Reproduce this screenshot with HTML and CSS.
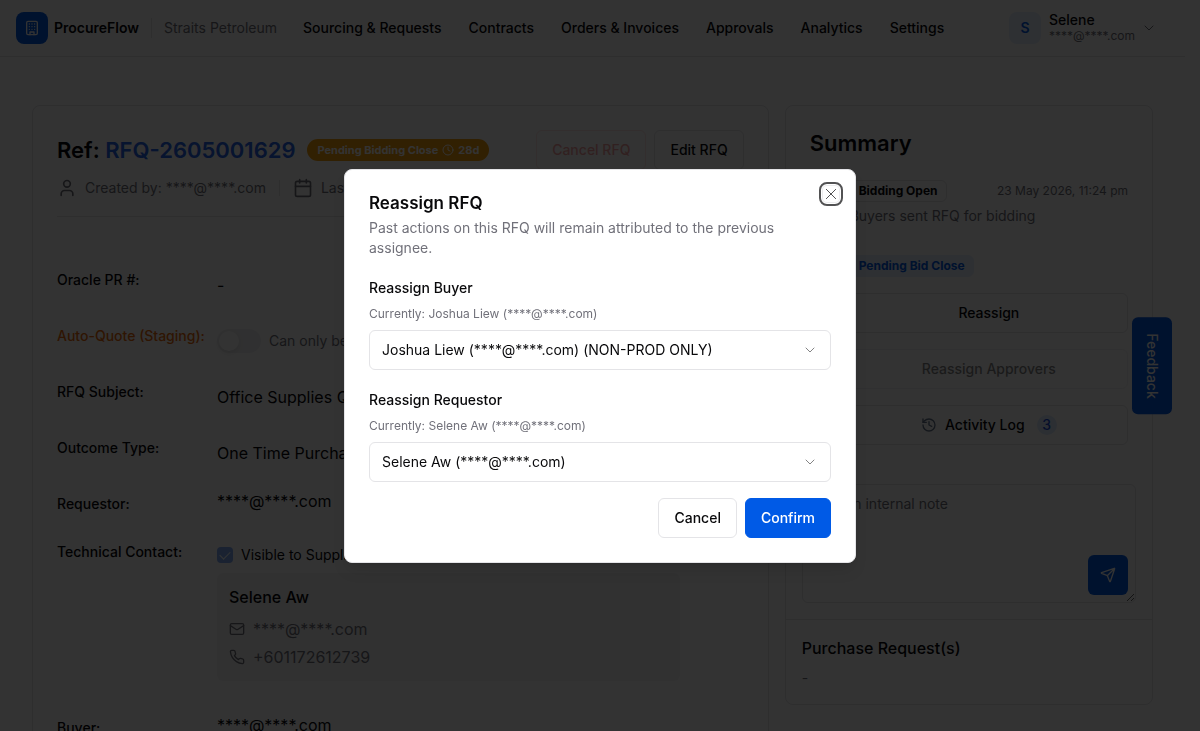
FILE: index.html
```html
<!DOCTYPE html>
<html lang="en">

<head>
    <meta charset="UTF-8">
    <meta name="viewport" content="width=device-width, initial-scale=1.0">
    <title>ProcureFlow - RFQ-2605001629</title>
    <link rel="stylesheet" href="styles.css">
</head>

<body>
    <header class="header">
        <a class="brand" href="#">
            <span class="brand-logo">
                <svg class="icon" width="16" height="16" viewBox="0 0 24 24">
                    <rect x="4" y="2" width="16" height="20" rx="2" />
                    <path d="M9 22v-4h6v4M8 6h.01M16 6h.01M12 6h.01M12 10h.01M12 14h.01M16 10h.01M16 14h.01M8 10h.01M8 14h.01" />
                </svg>
            </span>
            <span class="brand-name">ProcureFlow</span>
        </a>
        <span class="company">Straits Petroleum</span>
        <nav class="navbar">
            <a href="#">Sourcing &amp; Requests</a>
            <a href="#">Contracts</a>
            <a href="#">Orders &amp; Invoices</a>
            <a href="#">Approvals</a>
            <a href="#">Analytics</a>
            <a href="#">Settings</a>
        </nav>
        <button type="button" class="user-menu">
            <span class="avatar">S</span>
            <span class="user-info">
                <span class="user-name">Selene</span>
                <span class="user-email">****@****.com</span>
            </span>
            <svg class="icon thin user-chevron" width="16" height="16" viewBox="0 0 24 24">
                <path d="m6 9 6 6 6-6" />
            </svg>
        </button>
    </header>

    <main class="container">
        <!-- RFQ details -->
        <section class="card rfq">
            <div class="rfq-top">
                <h1 class="heading">Ref: <a href="#">RFQ-2605001629</a></h1>
                <span class="status">Pending Bidding Close
                    <svg class="icon" width="12" height="12" viewBox="0 0 24 24">
                        <circle cx="12" cy="12" r="10" />
                        <path d="M12 6v6l4 2" />
                    </svg>
                    28d</span>
                <div class="rfq-actions">
                    <button type="button" class="btn btn-danger" disabled>Cancel RFQ</button>
                    <button type="button" class="btn">Edit RFQ</button>
                </div>
            </div>
            <div class="meta">
                <svg class="icon" width="20" height="20" viewBox="0 0 24 24">
                    <path d="M19 21v-2a4 4 0 0 0-4-4H9a4 4 0 0 0-4 4v2" />
                    <circle cx="12" cy="7" r="4" />
                </svg>
                <span>Created by: ****@****.com</span>
                <span class="meta-line"></span>
                <svg class="icon" width="20" height="20" viewBox="0 0 24 24">
                    <path d="M8 2v4M16 2v4M3 10h18" />
                    <rect x="3" y="4" width="18" height="18" rx="2" />
                </svg>
                <span>Last updated: 23 May 2026</span>
            </div>

            <div class="fields">
                <div class="field">
                    <span class="field-label">Oracle PR #:</span>
                    <span class="field-value">-</span>
                </div>
                <div class="field">
                    <label class="field-label staging" for="autoQuote">Auto-Quote (Staging):</label>
                    <div class="field-value">
                        <input type="checkbox" class="switch" id="autoQuote" disabled>
                        <span class="hint">Can only be changed in draft</span>
                    </div>
                </div>
                <div class="field">
                    <span class="field-label">RFQ Subject:</span>
                    <span class="field-value">Office Supplies Quotation</span>
                </div>
                <div class="field">
                    <span class="field-label">Outcome Type:</span>
                    <span class="field-value">One Time Purchase</span>
                </div>
                <div class="field">
                    <span class="field-label">Requestor:</span>
                    <span class="field-text">****@****.com</span>
                </div>
                <div class="field">
                    <span class="field-label">Technical Contact:</span>
                    <div class="contact">
                        <label class="visible-check">
                            <input type="checkbox" class="checkbox" checked disabled>
                            Visible to Supplier
                        </label>
                        <div class="contact-box">
                            <div class="contact-name">Selene Aw</div>
                            <div class="contact-line">
                                <svg class="icon" width="16" height="16" viewBox="0 0 24 24">
                                    <rect x="2" y="4" width="20" height="16" rx="2" />
                                    <path d="m22 7-8.97 5.7a1.94 1.94 0 0 1-2.06 0L2 7" />
                                </svg>
                                ****@****.com
                            </div>
                            <div class="contact-line">
                                <svg class="icon" width="16" height="16" viewBox="0 0 24 24">
                                    <path d="M22 16.92v3a2 2 0 0 1-2.18 2 19.79 19.79 0 0 1-8.63-3.07 19.5 19.5 0 0 1-6-6 19.79 19.79 0 0 1-3.07-8.67A2 2 0 0 1 4.11 2h3a2 2 0 0 1 2 1.72c.13.96.36 1.9.7 2.81a2 2 0 0 1-.45 2.11L8.09 9.91a16 16 0 0 0 6 6l1.27-1.27a2 2 0 0 1 2.11-.45c.91.34 1.85.57 2.81.7A2 2 0 0 1 22 16.92z" />
                                </svg>
                                +601172612739
                            </div>
                        </div>
                    </div>
                </div>
                <div class="field">
                    <span class="field-label">Buyer:</span>
                    <span class="field-text">****@****.com</span>
                </div>
            </div>
        </section>

        <!-- Summary -->
        <aside class="card summary">
            <div class="summary-body">
                <h2 class="heading">Summary</h2>
                <div class="step">
                    <span class="dot"></span>
                    <div class="step-body">
                        <div class="step-top">
                            <span class="tag">Bidding Open</span>
                            <time class="step-date">23 May 2026, 11:24 pm</time>
                        </div>
                        <p class="step-text">Buyers sent RFQ for bidding</p>
                    </div>
                </div>
                <div class="step">
                    <span class="dot"></span>
                    <div class="step-body">
                        <span class="tag tag-blue">Pending Bid Close</span>
                        <div class="step-actions">
                            <button type="button" class="btn">Reassign</button>
                            <button type="button" class="btn" disabled>Reassign Approvers</button>
                            <button type="button" class="btn">
                                <svg class="icon history" width="16" height="16" viewBox="0 0 24 24">
                                    <path d="M3 12a9 9 0 1 0 9-9 9.75 9.75 0 0 0-6.74 2.74L3 8" />
                                    <path d="M3 3v5h5M12 7v5l4 2" />
                                </svg>
                                Activity Log
                                <span class="count">3</span>
                            </button>
                        </div>
                    </div>
                </div>
            </div>
            <div class="note">
                <textarea class="note-input" aria-label="Internal note" placeholder="Add an internal note"></textarea>
                <button type="button" class="note-send" aria-label="Send note">
                    <svg class="icon" width="16" height="16" viewBox="0 0 24 24">
                        <path d="M14.54 21.69a.5.5 0 0 0 .94-.03l6.5-19a.5.5 0 0 0-.64-.63l-19 6.5a.5.5 0 0 0-.02.93l7.93 3.18a2 2 0 0 1 1.11 1.11zM21.85 2.15l-10.94 10.94" />
                    </svg>
                </button>
            </div>
            <div class="requests">
                <h3>Purchase Request(s)</h3>
                <p>-</p>
            </div>
        </aside>
    </main>

    <button type="button" class="feedback">Feedback</button>

    <!-- Reassign dialog -->
    <div class="overlay">
        <div class="dialog" role="dialog" aria-modal="true" aria-labelledby="dialogTitle">
            <h2 class="dialog-title" id="dialogTitle">Reassign RFQ</h2>
            <p class="dialog-text">Past actions on this RFQ will remain attributed to the previous assignee.</p>
            <form class="dialog-form">
                <div class="form-group">
                    <label for="buyer">Reassign Buyer</label>
                    <p>Currently: Joshua Liew (****@****.com)</p>
                    <div class="select-wrap">
                        <select id="buyer" name="buyer">
                            <option>Joshua Liew (****@****.com) (NON-PROD ONLY)</option>
                        </select>
                        <svg class="icon thin" width="16" height="16" viewBox="0 0 24 24">
                            <path d="m6 9 6 6 6-6" />
                        </svg>
                    </div>
                </div>
                <div class="form-group">
                    <label for="requestor">Reassign Requestor</label>
                    <p>Currently: Selene Aw (****@****.com)</p>
                    <div class="select-wrap">
                        <select id="requestor" name="requestor">
                            <option>Selene Aw (****@****.com)</option>
                        </select>
                        <svg class="icon thin" width="16" height="16" viewBox="0 0 24 24">
                            <path d="m6 9 6 6 6-6" />
                        </svg>
                    </div>
                </div>
                <div class="dialog-buttons">
                    <button type="button" class="btn">Cancel</button>
                    <button type="button" class="btn btn-primary">Confirm</button>
                </div>
            </form>
            <button type="button" class="dialog-close" aria-label="Close">
                <svg class="icon thin" width="16" height="16" viewBox="0 0 24 24">
                    <path d="M19 5 5 19M5 5l14 14" />
                </svg>
            </button>
        </div>
    </div>
</body>

</html>
```

FILE: styles.css
```css
* {
    box-sizing: border-box;
}

html {
    height: 100%;
    overflow: hidden;
}

body {
    font-family: Inter, "Liberation Sans", sans-serif;
    font-size: 14px;
    line-height: 20px;
    color: #09090b;
    background-color: #fff;
    margin: 0;
    padding-right: 15px;
    height: 100%;
    overflow: hidden;
}

h1,
h2,
h3,
p {
    margin: 0;
}

a {
    color: inherit;
    text-decoration: none;
}

button,
select,
textarea {
    font: inherit;
    color: inherit;
}

button {
    cursor: pointer;
}

.icon {
    fill: none;
    stroke: currentColor;
    stroke-width: 2;
    stroke-linecap: round;
    stroke-linejoin: round;
    flex-shrink: 0;
}

.thin {
    stroke-width: 1.5;
}

/* Header */
.header {
    display: flex;
    align-items: center;
    height: 57px;
    padding: 0 24px 0 16px;
    border-bottom: 1px solid #e4e4e7;
}

.brand {
    display: flex;
    align-items: center;
    gap: 6px;
}

.brand-logo {
    display: flex;
    align-items: center;
    justify-content: center;
    width: 32px;
    height: 32px;
    border-radius: 8px;
    background-color: #005ae6;
    color: #fff;
}

.brand-name {
    font-weight: 600;
}

.company {
    margin-left: 12px;
    padding-left: 12px;
    border-left: 1px solid #e4e4e7;
    color: #71717a;
}

.navbar {
    display: flex;
    gap: 27px;
    margin-left: 26px;
    font-weight: 500;
}

.user-menu {
    display: flex;
    align-items: center;
    margin-left: auto;
    padding: 0 4px 0 0;
    border: none;
    background: none;
    text-align: left;
}

.avatar {
    display: flex;
    align-items: center;
    justify-content: center;
    width: 32px;
    height: 32px;
    margin-right: 8px;
    border-radius: 8px;
    background-color: #e6effd;
    color: #005ae6;
    font-weight: 600;
}

.user-info {
    display: flex;
    flex-direction: column;
    line-height: 16px;
}

.user-name {
    font-weight: 500;
}

.user-email {
    font-size: 12px;
    color: #71717a;
}

.user-chevron {
    margin-left: 6px;
    color: #71717a;
}

/* Page */
.container {
    display: grid;
    grid-template-columns: 2fr 1fr;
    gap: 16px;
    align-items: start;
    padding: 48px 32px;
}

.card {
    min-width: 0;
    border: 1px solid #e4e4e7;
    border-radius: 8px;
    background-color: #fff;
}

.heading {
    font-size: 22px;
    line-height: 26px;
    font-weight: 600;
    white-space: nowrap;
}

.heading a {
    color: #2563eb;
}

.btn {
    display: flex;
    align-items: center;
    justify-content: center;
    height: 40px;
    padding: 0 15px;
    border: 1px solid #e4e4e7;
    border-radius: 6px;
    background-color: #fff;
    font-weight: 500;
    white-space: nowrap;
}

.btn:disabled {
    opacity: 0.5;
}

.btn-danger {
    color: #ef4444;
    border-color: #fecaca;
}

.btn-primary {
    color: #fff;
    border-color: #005ae6;
    background-color: #005ae6;
}

.rfq {
    padding: 24px;
}

.rfq-top {
    display: flex;
    align-items: center;
    gap: 12px;
}

.status {
    display: flex;
    align-items: center;
    gap: 4px;
    height: 22px;
    padding: 0 10px;
    border-radius: 11px;
    background-color: #f59e0b;
    color: #fff;
    font-size: 11px;
    font-weight: 700;
    white-space: nowrap;
}

.rfq-actions {
    display: flex;
    gap: 8px;
    margin-left: auto;
}

.meta {
    display: flex;
    align-items: center;
    gap: 8px;
    padding: 8px 0 18px;
    border-bottom: 1px solid #e4e4e7;
    color: #71717a;
}

.meta-line {
    width: 1px;
    height: 16px;
    margin: 0 5px;
    background-color: #e4e4e7;
}

.fields {
    display: grid;
    gap: 16px;
    padding-top: 48px;
}

.field {
    display: grid;
    grid-template-columns: 160px 1fr;
    align-items: start;
}

.field-label {
    padding: 5px 0 7px;
    font-weight: 500;
}

.staging {
    color: #ea6a0c;
}

.field-value {
    display: flex;
    align-items: center;
    gap: 8px;
    height: 40px;
    font-size: 16px;
}

.field-text {
    font-size: 16px;
    line-height: 24px;
}

.hint {
    font-size: 14px;
    color: #71717a;
}

.switch {
    appearance: none;
    width: 44px;
    height: 24px;
    margin: 0;
    padding: 2px;
    border-radius: 12px;
    background-color: #f1f1f3;
}

.switch::before {
    content: "";
    display: block;
    width: 20px;
    height: 20px;
    border-radius: 50%;
    background-color: #fff;
    box-shadow: 0 2px 6px rgba(0, 0, 0, 0.1);
}

.contact {
    padding: 8px 64px 16px 0;
}

.visible-check {
    display: flex;
    align-items: center;
    gap: 8px;
}

.checkbox {
    appearance: none;
    width: 16px;
    height: 16px;
    margin: 0;
    border-radius: 4px;
    background-color: #80acf2;
}

.checkbox::before {
    content: "";
    display: block;
    width: 5px;
    height: 9px;
    margin: 2px auto;
    border: solid #fff;
    border-width: 0 1px 1px 0;
    transform: rotate(45deg);
}

.contact-box {
    margin-top: 8px;
    padding: 12px;
    border-radius: 6px;
    background-color: #f5f5f6;
    font-size: 16px;
    line-height: 24px;
}

.contact-name {
    margin-bottom: 8px;
    font-weight: 500;
}

.contact-line {
    display: flex;
    align-items: center;
    gap: 8px;
    color: #71717a;
}

.contact-line + .contact-line {
    margin-top: 4px;
}

/* Summary */
.summary-body {
    padding: 24px 24px 23px;
}

.step {
    display: grid;
    grid-template-columns: 24px 1fr;
    gap: 16px;
    margin-top: 24px;
}

.step + .step {
    margin-top: 29px;
}

.dot {
    width: 24px;
    height: 24px;
    border-radius: 50%;
    background-color: #005ae6;
}

.step-top {
    display: flex;
    align-items: center;
    justify-content: space-between;
}

.tag {
    display: inline-block;
    padding: 0 8px;
    border: 1px solid #e4e4e7;
    border-radius: 6px;
    font-size: 12px;
    font-weight: 700;
}

.tag-blue {
    border-color: #e6effd;
    background-color: #e6effd;
    color: #005ae6;
}

.step-date {
    font-size: 12px;
    color: #71717a;
}

.step-text {
    margin-top: 4px;
    color: #71717a;
}

.step-actions {
    display: grid;
    gap: 16px;
    margin-top: 16px;
}

.history {
    margin-right: 8px;
    color: #64748b;
}

.count {
    width: 20px;
    height: 20px;
    margin-left: 12px;
    border-radius: 50%;
    background-color: #dbeafe;
    color: #1d4ed8;
}

.note {
    position: relative;
    padding: 16px;
    border-bottom: 1px solid #e4e4e7;
}

.note-input {
    display: block;
    width: 100%;
    height: 119px;
    padding: 9px 12px;
    border: 1px solid #e4e4e7;
    border-radius: 6px;
    background-color: #fff;
}

.note-input::placeholder {
    color: #71717a;
}

.note-send {
    position: absolute;
    right: 24px;
    bottom: 24px;
    display: flex;
    align-items: center;
    justify-content: center;
    width: 40px;
    height: 40px;
    border: none;
    border-radius: 6px;
    background-color: #005ae6;
    color: #fff;
}

.requests {
    padding: 16px;
}

.requests h3 {
    font-size: 16px;
    line-height: 24px;
    font-weight: 500;
}

.requests p {
    margin-top: 8px;
    color: #71717a;
}

.feedback {
    position: fixed;
    top: 50%;
    right: 28px;
    transform: translateY(-50%);
    width: 40px;
    padding: 16px 0;
    border: none;
    border-radius: 6px;
    background-color: #005ae6;
    color: #fff;
    font-weight: 500;
    writing-mode: vertical-rl;
}

/* Dialog */
.overlay {
    position: fixed;
    inset: 0;
    display: flex;
    align-items: center;
    justify-content: center;
    background-color: rgba(0, 0, 0, 0.8);
}

.dialog {
    position: relative;
    width: 100%;
    max-width: 512px;
    padding: 24px;
    border: 1px solid #e4e4e7;
    border-radius: 8px;
    background-color: #fff;
    box-shadow: 0 10px 15px -3px rgba(0, 0, 0, 0.1), 0 4px 6px -4px rgba(0, 0, 0, 0.1);
}

.dialog-title {
    font-size: 17px;
    line-height: 18px;
    font-weight: 600;
}

.dialog-text {
    margin-top: 6px;
    color: #71717a;
}

.dialog-form {
    display: grid;
    gap: 20px;
    margin-top: 20px;
}

.form-group {
    display: grid;
    gap: 8px;
}

.form-group label {
    font-weight: 500;
}

.form-group p {
    font-size: 12px;
    line-height: 16px;
    color: #71717a;
}

.select-wrap {
    position: relative;
}

.select-wrap select {
    appearance: none;
    display: block;
    width: 100%;
    height: 40px;
    padding: 0 36px 0 12px;
    border: 1px solid #e4e4e7;
    border-radius: 6px;
    background-color: #fff;
}

.select-wrap .icon {
    position: absolute;
    top: 12px;
    right: 13px;
    opacity: 0.5;
    pointer-events: none;
}

.dialog-buttons {
    display: flex;
    justify-content: flex-end;
    gap: 8px;
    margin-top: -4px;
}

.dialog-close {
    position: absolute;
    top: 16px;
    right: 16px;
    display: flex;
    padding: 0;
    border: none;
    border-radius: 4px;
    background: none;
    box-shadow: 0 0 0 1px #e4e4e7;
    opacity: 0.7;
    outline: 2px solid #09090b;
    outline-offset: 2px;
}
```
